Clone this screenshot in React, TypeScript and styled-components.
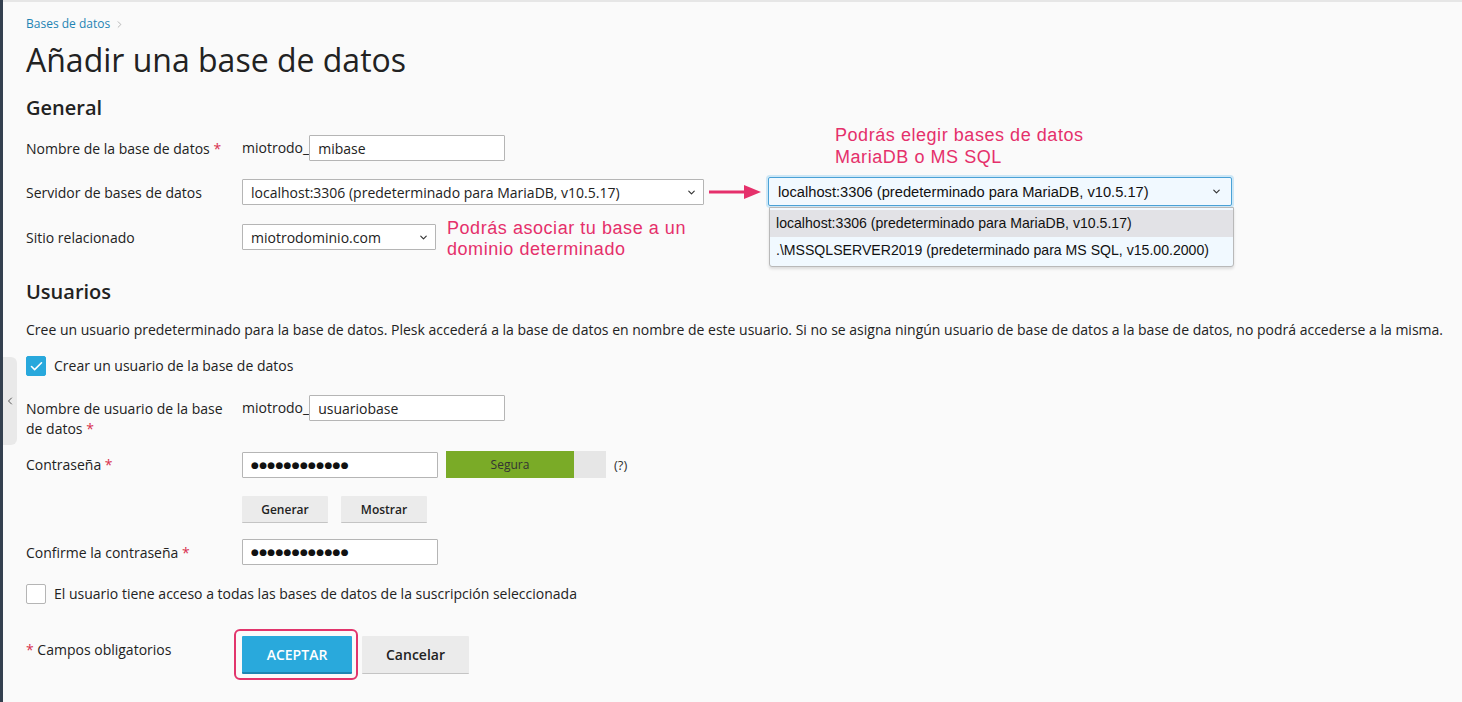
import React from "react";
import styled, { createGlobalStyle } from "styled-components";
import { ChevronDown, ChevronLeft, ChevronRight, Check } from "lucide-react";

const GlobalStyle = createGlobalStyle`
  html, body {
    margin: 0;
    padding: 0;
    background: #fafafa;
  }
  body {
    font-family: "Open Sans", "Liberation Sans", sans-serif;
    color: #222;
    font-size: 14px;
  }
  * { box-sizing: border-box; }
`;

const Shell = styled.div`
  display: flex;
  min-height: 100vh;
  overflow: hidden;
  position: relative;
`;

const Rail = styled.div`
  width: 3px;
  flex: none;
  background: #34404f;
`;

const RailTab = styled.div`
  position: absolute;
  left: 3px;
  top: 357px;
  width: 14px;
  height: 88px;
  background: #e9e9e9;
  border-radius: 0 6px 6px 0;
  display: flex;
  align-items: center;
  justify-content: center;
  color: #444;
`;

const Main = styled.main`
  flex: 1;
  border-top: 2px solid #e6e6e6;
  padding: 14px 0 0 23px;
`;

const Breadcrumb = styled.div`
  display: flex;
  align-items: center;
  gap: 4px;
  font-size: 12px;
  line-height: 16px;
  color: #1f84b4;
  svg { color: #999; }
`;

const Title = styled.h1`
  margin: 8px 0 0;
  font-size: 32px;
  font-weight: 400;
  line-height: 40px;
  color: #222;
`;

const SectionTitle = styled.h2<{ $top: number }>`
  margin: ${(p) => p.$top}px 0 0;
  font-size: 20px;
  font-weight: 600;
  line-height: 26px;
  color: #222;
`;

const Row = styled.div<{ $top: number }>`
  display: flex;
  align-items: flex-start;
  margin-top: ${(p) => p.$top}px;
`;

const Label = styled.label`
  width: 216px;
  flex: none;
  padding-top: 4px;
  padding-right: 12px;
  line-height: 19.5px;
  font-size: 14px;
  color: #222;
`;

const Req = styled.span`
  color: #d8314f;
`;

const Field = styled.div`
  display: flex;
  align-items: center;
`;

const Prefix = styled.span`
  font-size: 14px;
  line-height: 26px;
  color: #222;
`;

const TextInput = styled.input<{ $w: number }>`
  width: ${(p) => p.$w}px;
  height: 26px;
  border: 1px solid #b5b5b5;
  border-radius: 1px;
  background: #fff;
  padding: 0 8px;
  font-family: "Open Sans", sans-serif;
  font-size: 14px;
  color: #222;
  outline: none;
`;

const Dots = styled(TextInput)`
  font-family: "DejaVu Sans", sans-serif;
  font-size: 9px;
  letter-spacing: 0.3px;
  color: #111;
`;

const SelectWrap = styled.div<{ $w: number }>`
  position: relative;
  width: ${(p) => p.$w}px;
  height: 26px;
  svg {
    position: absolute;
    right: 7px;
    top: 8px;
    pointer-events: none;
    color: #333;
  }
`;

const Select = styled.select`
  appearance: none;
  width: 100%;
  height: 100%;
  border: 1px solid #b5b5b5;
  border-radius: 1px;
  background: #fff;
  padding: 0 24px 0 8px;
  font-family: "Open Sans", sans-serif;
  font-size: 14px;
  color: #222;
  outline: none;
`;

const Arrow = styled.svg`
  margin: 0 6px 0 4px;
  flex: none;
`;

const Callout = styled.div`
  font-family: "Liberation Sans", Arial, sans-serif;
  font-size: 18px;
  letter-spacing: 0.55px;
  line-height: 21px;
  color: #e5306b;
  white-space: nowrap;
`;

const SideCallout = styled(Callout)`
  margin: -6px 0 0 11px;
  height: 26px;
`;

const TopCallout = styled(Callout)`
  position: absolute;
  left: 66px;
  bottom: 37px;
  line-height: 22px;
`;

const OpenSelect = styled.div`
  position: relative;
  width: 464px;
  height: 29px;
  margin: -2px 0 -1px;
  border: 1px solid #4aa1d6;
  border-radius: 2px;
  box-shadow: 0 0 0 2px #cde7f6;
  background: #f1f9ff;
  display: flex;
  align-items: center;
  justify-content: space-between;
  padding: 0 9px;
  font-family: "Liberation Sans", Arial, sans-serif;
  font-size: 14.7px;
  color: #111;
  svg { color: #333; flex: none; }
`;

const Menu = styled.ul`
  position: absolute;
  left: 0;
  top: 29px;
  width: 465px;
  margin: 0;
  padding: 2px 0;
  list-style: none;
  background: #f1f9ff;
  border: 1px solid #b9b9b9;
  border-radius: 0 0 3px 3px;
  box-shadow: 0 2px 3px rgba(0, 0, 0, 0.12);
  z-index: 2;
`;

const Option = styled.li<{ $active?: boolean }>`
  height: 27px;
  line-height: 27px;
  padding-left: 6px;
  font-family: "Liberation Sans", Arial, sans-serif;
  font-size: 14.1px;
  color: #111;
  background: ${(p) => (p.$active ? "#e2e2e6" : "transparent")};
  white-space: nowrap;
`;

const Hint = styled.p`
  margin: 15px 0 0;
  font-size: 14px;
  line-height: 20px;
  color: #222;
  white-space: nowrap;
`;

const CheckRow = styled.label<{ $top: number }>`
  display: flex;
  align-items: center;
  gap: 8px;
  margin-top: ${(p) => p.$top}px;
  font-size: 14px;
  line-height: 20px;
  color: #222;
`;

const Box = styled.span<{ $on?: boolean }>`
  width: 20px;
  height: 20px;
  flex: none;
  border-radius: 2px;
  border: 1px solid ${(p) => (p.$on ? "#28a8dc" : "#b5b5b5")};
  background: ${(p) => (p.$on ? "#28a8dc" : "#fff")};
  display: flex;
  align-items: center;
  justify-content: center;
  color: #fff;
`;

const Strength = styled.div`
  display: flex;
  width: 160px;
  height: 27px;
  margin-left: 8px;
  background: #e6e6e6;
`;

const StrengthFill = styled.div`
  height: 100%;
  background: #7aab27;
  display: flex;
  align-items: center;
  justify-content: center;
  font-size: 12px;
  color: #333;
`;

const Help = styled.span`
  margin-left: 8px;
  font-size: 13px;
  color: #333;
`;

const Buttons = styled.div<{ $gap: number }>`
  display: flex;
  align-items: center;
  gap: ${(p) => p.$gap}px;
`;

const Button = styled.button<{ $w: number; $h: number; $size: number }>`
  width: ${(p) => p.$w}px;
  height: ${(p) => p.$h}px;
  border: none;
  border-bottom: 1px solid #c4c4c4;
  border-radius: 1px;
  background: #ebebeb;
  font-family: "Open Sans", sans-serif;
  font-size: ${(p) => p.$size}px;
  font-weight: 600;
  color: #222;
  padding: 0;
  cursor: pointer;
`;

const PrimaryButton = styled(Button)`
  background: #29a9dc;
  border-bottom: 2px solid #1d86b3;
  color: #fff;
  text-transform: uppercase;
`;

const Highlight = styled.div`
  padding: 5px 4px 4px 6px;
  border: 2px solid #e2356c;
  border-radius: 6px;
  margin-left: -8px;
`;

const Footer = styled.div`
  display: flex;
  align-items: center;
  margin-top: 25px;
`;

const FooterNote = styled.div`
  width: 216px;
  flex: none;
  margin-top: -11px;
  font-size: 14px;
  color: #222;
`;

const Dropdown = ({ value, width }: { value: string; width: number }) => (
  <SelectWrap $w={width}>
    <Select value={value} onChange={() => {}}>
      <option>{value}</option>
    </Select>
    <ChevronDown size={11} strokeWidth={2.5} />
  </SelectWrap>
);

const servers = [
  "localhost:3306 (predeterminado para MariaDB, v10.5.17)",
  ".\\MSSQLSERVER2019 (predeterminado para MS SQL, v15.00.2000)",
];

const dots = "●●●●●●●●●●●●";

export default function App() {
  return (
    <>
      <GlobalStyle />
      <Shell>
        <Rail />
        <RailTab>
          <ChevronLeft size={12} strokeWidth={1.8} />
        </RailTab>
        <Main>
          <Breadcrumb>
            Bases de datos <ChevronRight size={11} strokeWidth={1.5} />
          </Breadcrumb>
          <Title>Añadir una base de datos</Title>

          <SectionTitle $top={15}>General</SectionTitle>
          <Row $top={14}>
            <Label>
              Nombre de la base de datos <Req>*</Req>
            </Label>
            <Field>
              <Prefix>miotrodo_</Prefix>
              <TextInput $w={196} defaultValue="mibase" />
            </Field>
          </Row>
          <Row $top={18}>
            <Label>Servidor de bases de datos</Label>
            <Field>
              <Dropdown value={servers[0]} width={462} />
              <Arrow width="54" height="16" viewBox="0 0 54 16">
                <path d="M1 8 H38" stroke="#e5306b" strokeWidth="3" />
                <path d="M36 1 L53 8 L36 15 Z" fill="#e5306b" />
              </Arrow>
              <OpenSelect>
                <TopCallout>
                  Podrás elegir bases de datos
                  <br />
                  MariaDB o MS SQL
                </TopCallout>
                <span>{servers[0]}</span>
                <ChevronDown size={11} strokeWidth={2.5} />
                <Menu>
                  <Option $active>{servers[0]}</Option>
                  <Option>{servers[1]}</Option>
                </Menu>
              </OpenSelect>
            </Field>
          </Row>
          <Row $top={19}>
            <Label>Sitio relacionado</Label>
            <Field>
              <Dropdown value="miotrodominio.com" width={194} />
            </Field>
            <SideCallout>
              Podrás asociar tu base a un
              <br />
              dominio determinado
            </SideCallout>
          </Row>

          <SectionTitle $top={29}>Usuarios</SectionTitle>
          <Hint>
            Cree un usuario predeterminado para la base de datos. Plesk accederá a la base de datos en nombre de este
            usuario. Si no se asigna ningún usuario de base de datos a la base de datos, no podrá accederse a la misma.
          </Hint>
          <CheckRow $top={16}>
            <Box $on>
              <Check size={15} strokeWidth={2.5} />
            </Box>
            Crear un usuario de la base de datos
          </CheckRow>
          <Row $top={19}>
            <Label>
              Nombre de usuario de la base de datos <Req>*</Req>
            </Label>
            <Field>
              <Prefix>miotrodo_</Prefix>
              <TextInput $w={196} defaultValue="usuariobase" />
            </Field>
          </Row>
          <Row $top={13}>
            <Label>
              Contraseña <Req>*</Req>
            </Label>
            <Field>
              <Dots $w={196} defaultValue={dots} type="text" readOnly />
              <Strength>
                <StrengthFill style={{ width: "80%" }}>Segura</StrengthFill>
              </Strength>
              <Help>(?)</Help>
            </Field>
          </Row>
          <Row $top={18}>
            <Label />
            <Buttons $gap={13}>
              <Button $w={86} $h={27} $size={12}>
                Generar
              </Button>
              <Button $w={86} $h={27} $size={12}>
                Mostrar
              </Button>
            </Buttons>
          </Row>
          <Row $top={16}>
            <Label>
              Confirme la contraseña <Req>*</Req>
            </Label>
            <Field>
              <Dots $w={196} defaultValue={dots} type="text" readOnly />
            </Field>
          </Row>
          <CheckRow $top={19}>
            <Box />
            El usuario tiene acceso a todas las bases de datos de la suscripción seleccionada
          </CheckRow>

          <Footer>
            <FooterNote>
              <Req>*</Req> Campos obligatorios
            </FooterNote>
            <Buttons $gap={4}>
              <Highlight>
                <PrimaryButton $w={110} $h={38} $size={14}>
                  Aceptar
                </PrimaryButton>
              </Highlight>
              <Button $w={107} $h={38} $size={14}>
                Cancelar
              </Button>
            </Buttons>
          </Footer>
        </Main>
      </Shell>
    </>
  );
}
